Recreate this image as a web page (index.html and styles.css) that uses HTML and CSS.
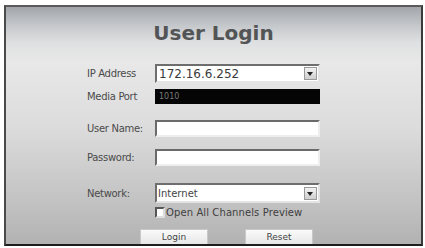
FILE: index.html
```html
<!DOCTYPE html>
<html>
<head>
<meta charset="utf-8">
<link rel="stylesheet" href="styles.css">
</head>
<body>
<div class="frame">
  <div class="title">User Login</div>
  <div class="form">
    <div class="row r-ip">
      <div class="label">IP Address</div>
      <div class="field select"><span class="ip">172.16.6.252</span><span class="arrow"></span></div>
    </div>
    <div class="row r-media">
      <div class="label">Media Port</div>
      <div class="field dark"><span>1010</span></div>
    </div>
    <div class="row r-user">
      <div class="label">User Name:</div>
      <div class="field text"></div>
    </div>
    <div class="row r-pass">
      <div class="label">Password:</div>
      <div class="field text"></div>
    </div>
    <div class="row r-net">
      <div class="label">Network:</div>
      <div class="field select"><span class="net">Internet</span><span class="arrow"></span></div>
    </div>
    <div class="row r-check">
      <div class="label"></div>
      <div class="check"></div>
      <div class="check-label">Open All Channels Preview</div>
    </div>
  </div>
  <div class="buttons">
    <div class="btn">Login</div>
    <div class="btn">Reset</div>
  </div>
</div>
</body>
</html>
```
FILE: styles.css
```css
body {
  margin: 0;
  background: #ffffff;
  font-family: "DejaVu Sans", Verdana, sans-serif;
}
.frame {
  margin: 5px 0 0 4px;
  width: 415px;
  height: 237px;
  border: 2px solid;
  border-color: #5a5a5a #3a3a3a #1e1e1e #4a4a4a;
  background: linear-gradient(to bottom, #a2a6aa 0px, #c4c7ca 18px, #dfe0e1 36px, #e8e8e8 55px, #dcdcdc 120px, #c4c4c4 190px, #b2b2b2 237px);
  overflow: hidden;
  display: flex;
  flex-direction: column;
}
.title {
  margin-top: 14px;
  height: 24px;
  line-height: 24px;
  text-align: center;
  font-weight: bold;
  font-size: 20px;
  color: #525456;
}
.form {
  display: flex;
  flex-direction: column;
  padding-left: 81px;
}
.row {
  display: flex;
  align-items: center;
}
.label {
  width: 68px;
  font-size: 10px;
  color: #4a4a4a;
  letter-spacing: -0.3px;
}
.field {
  width: 165px;
  height: 100%;
  box-sizing: border-box;
}
.r-ip { margin-top: 19px; height: 19px; }
.r-media { margin-top: 6px; height: 15px; }
.r-user { margin-top: 16px; height: 17px; }
.r-pass { margin-top: 12px; height: 17px; }
.r-net { margin-top: 17px; height: 20px; }
.r-check { margin-top: 4px; height: 11px; }
.select {
  background: #ffffff;
  border: 2px solid;
  border-color: #6e6e6e #e4e4e4 #e4e4e4 #6e6e6e;
  display: flex;
  align-items: center;
  justify-content: space-between;
  padding: 0 1px 0 1px;
}
.ip {
  font-size: 12px;
  color: #3a3a3a;
  margin-left: 1px;
}
.net {
  font-size: 10px;
  color: #444;
}
.arrow {
  width: 13px;
  height: 13px;
  box-sizing: border-box;
  background: linear-gradient(to bottom, #f2f2f2, #cfcfcf);
  border: 1px solid #9a9a9a;
  position: relative;
}
.arrow::after {
  content: "";
  position: absolute;
  left: 2px;
  top: 4px;
  border-left: 3.5px solid transparent;
  border-right: 3.5px solid transparent;
  border-top: 4px solid #222;
}
.dark {
  background: #050505;
  display: flex;
  align-items: center;
  padding-left: 4px;
  font-size: 8px;
  color: #7a7a7a;
}
.text {
  background: #ffffff;
  border: 2px solid;
  border-color: #6a6a6a #eeeeee #eeeeee #6a6a6a;
}
.check {
  width: 10px;
  height: 11px;
  box-sizing: border-box;
  background: #ffffff;
  border: 2px solid;
  border-color: #555 #ddd #ddd #555;
}
.check-label {
  margin-left: 1px;
  font-size: 10px;
  color: #3e3e3e;
  letter-spacing: 0.1px;
}
.buttons {
  display: flex;
  margin-top: 11px;
  padding-left: 134px;
  gap: 37px;
}
.btn {
  width: 68px;
  height: 20px;
  box-sizing: border-box;
  background: linear-gradient(to bottom, #fafafa, #e2e2e2);
  border: 1px solid #c8c8c8;
  font-size: 9px;
  color: #444;
  text-align: center;
  line-height: 14px;
}
```
